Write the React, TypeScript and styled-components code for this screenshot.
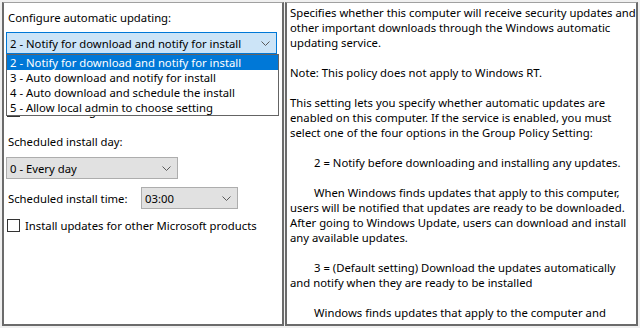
import styled, { createGlobalStyle } from 'styled-components';

const GlobalStyle = createGlobalStyle`
  html, body {
    margin: 0;
    padding: 0;
    background: #f0f0f0;
  }
  body {
    font-family: "Noto Sans", "Open Sans", sans-serif;
    font-size: 11.3px;
    color: #000;
  }
`;

const Page = styled.div`
  display: flex;
  gap: 1px;
  padding: 2px;
  width: 640px;
  height: 328px;
  box-sizing: border-box;
`;

const Panel = styled.div<{ $width: number }>`
  position: relative;
  width: ${(p) => p.$width}px;
  box-sizing: border-box;
  background: #fff;
  border: 2px solid #6b6b6b;
  border-top: 1px solid #a0a0a0;
  overflow: hidden;
`;

const Options = styled(Panel)`
  display: flex;
  flex-direction: column;
  padding: 7px 2px 0;
`;

const Label = styled.div<{ $top?: number }>`
  line-height: 15px;
  height: 15px;
  padding-left: 2px;
  margin-top: ${(p) => p.$top ?? 0}px;
  white-space: nowrap;
`;

const Combo = styled.div<{ $width: number; $open?: boolean; $top?: number }>`
  position: relative;
  display: flex;
  align-items: center;
  justify-content: space-between;
  width: ${(p) => p.$width}px;
  height: 22px;
  box-sizing: border-box;
  margin-top: ${(p) => p.$top ?? 0}px;
  padding: 0 6px 0 3px;
  background: ${(p) => (p.$open ? '#cce4f7' : '#e1e1e1')};
  border: 1px solid ${(p) => (p.$open ? '#0078d7' : '#adadad')};
  white-space: nowrap;
`;

const Chevron = () => (
  <svg width="9" height="5" viewBox="0 0 9 5">
    <path d="M0.5 0.5 L4.5 4.5 L8.5 0.5" fill="none" stroke="#5a5a5a" strokeWidth="1" />
  </svg>
);

const DropList = styled.ul`
  position: absolute;
  left: -1px;
  top: 21px;
  width: 271px;
  margin: 0;
  padding: 0;
  list-style: none;
  background: #fff;
  border: 1px solid #646464;
  z-index: 2;
`;

const Item = styled.li<{ $active?: boolean }>`
  height: 15px;
  line-height: 15px;
  padding-left: 3px;
  background: ${(p) => (p.$active ? '#0078d7' : 'transparent')};
  color: ${(p) => (p.$active ? '#fff' : '#000')};
`;

const CheckRow = styled.label<{ $top?: number }>`
  display: flex;
  align-items: center;
  gap: 5px;
  margin-top: ${(p) => p.$top ?? 0}px;
  padding-left: 1px;
  line-height: 15px;
  white-space: nowrap;
`;

const Box = styled.span`
  width: 13px;
  height: 13px;
  box-sizing: border-box;
  background: #fff;
  border: 1px solid #333;
`;

const TimeRow = styled.div`
  display: flex;
  align-items: center;
  margin-top: 8px;
`;

const TimeLabel = styled(Label)`
  width: 133px;
`;

const Help = styled(Panel)`
  padding: 2px 0 0 3px;
`;

const Line = styled.div<{ $indent?: boolean }>`
  height: 15px;
  line-height: 15px;
  white-space: nowrap;
  padding-left: ${(p) => (p.$indent ? 24 : 0)}px;
`;

const options = [
  '2 - Notify for download and notify for install',
  '3 - Auto download and notify for install',
  '4 - Auto download and schedule the install',
  '5 - Allow local admin to choose setting',
];

const helpLines: [string, boolean?][] = [
  ['Specifies whether this computer will receive security updates and'],
  ['other important downloads through the Windows automatic'],
  ['updating service.'],
  [''],
  ['Note: This policy does not apply to Windows RT.'],
  [''],
  ['This setting lets you specify whether automatic updates are'],
  ['enabled on this computer. If the service is enabled, you must'],
  ['select one of the four options in the Group Policy Setting:'],
  [''],
  ['2 = Notify before downloading and installing any updates.', true],
  [''],
  ['When Windows finds updates that apply to this computer,', true],
  ['users will be notified that updates are ready to be downloaded.'],
  ['After going to Windows Update, users can download and install'],
  ['any available updates.'],
  [''],
  ['3 = (Default setting) Download the updates automatically', true],
  ['and notify when they are ready to be installed'],
  [''],
  ['Windows finds updates that apply to the computer and', true],
];

export default function App() {
  return (
    <>
      <GlobalStyle />
      <Page>
        <Options $width={282}>
          <Label>Configure automatic updating:</Label>
          <Combo $width={271} $open $top={7}>
            <span>{options[0]}</span>
            <Chevron />
            <DropList>
              {options.map((o, i) => (
                <Item key={o} $active={i === 0}>
                  {o}
                </Item>
              ))}
            </DropList>
          </Combo>
          <CheckRow $top={49}>
            <Box />
            Install during automatic maintenance
          </CheckRow>
          <Label $top={16}>Scheduled install day:</Label>
          <Combo $width={172} $top={8}>
            <span>0 - Every day</span>
            <Chevron />
          </Combo>
          <TimeRow>
            <TimeLabel>Scheduled install time:</TimeLabel>
            <Combo $width={97}>
              <span>03:00</span>
              <Chevron />
            </Combo>
          </TimeRow>
          <CheckRow $top={9}>
            <Box />
            Install updates for other Microsoft products
          </CheckRow>
        </Options>
        <Help $width={353}>
          {helpLines.map(([t, indent], i) => (
            <Line key={i} $indent={indent}>
              {t || '\u00a0'}
            </Line>
          ))}
        </Help>
      </Page>
    </>
  );
}
